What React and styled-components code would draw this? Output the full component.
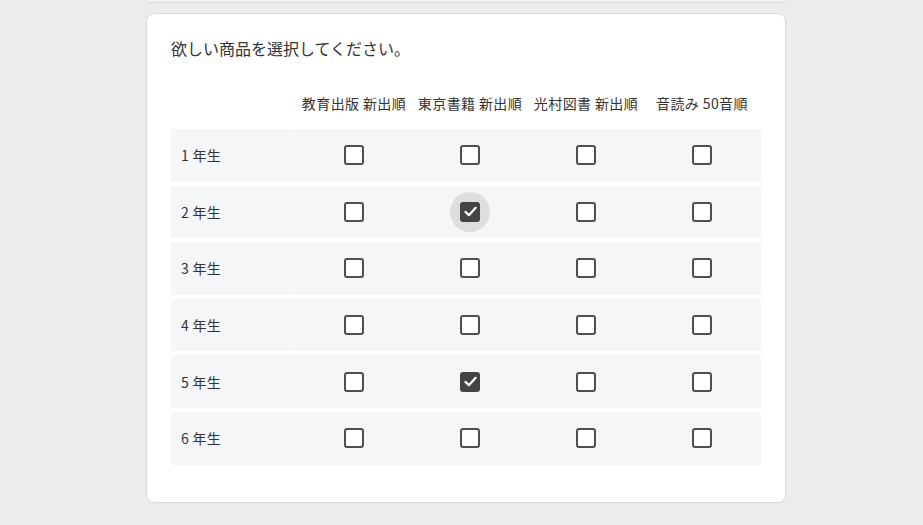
import React, { useState } from 'react';
import styled, { createGlobalStyle } from 'styled-components';

const GlobalStyle = createGlobalStyle`
  html, body {
    margin: 0;
    padding: 0;
    background: #ececec;
  }
  body {
    font-family: "Noto Sans CJK JP", "Noto Sans", sans-serif;
    color: #333;
  }
`;

const Page = styled.div`
  padding: 0 0 20px 146px;
  display: flex;
  flex-direction: column;
  gap: 10px;
`;

const PrevCard = styled.div`
  width: 638px;
  height: 2px;
  background: #f4f4f4;
  border: 1px solid #dcdcdc;
  border-top: none;
  border-radius: 0 0 8px 8px;
`;

const Card = styled.section`
  width: 590px;
  background: #fff;
  border: 1px solid #dadada;
  border-radius: 8px;
  padding: 23px 24px 37px 24px;
`;

const Title = styled.p`
  margin: 0 0 34px 0;
  font-size: 16px;
  line-height: 22px;
  color: #333;
`;

const Grid = styled.div`
  display: grid;
  grid-template-columns: 125px repeat(4, 116px) 1fr;
`;

const HeadRow = styled(Grid)`
  height: 20px;
  margin-bottom: 16px;
`;

const HeadCell = styled.div`
  font-size: 14px;
  line-height: 20px;
  letter-spacing: 0.4px;
  text-align: center;
  white-space: nowrap;
  color: #333;
`;

const Rows = styled.div`
  display: flex;
  flex-direction: column;
  gap: 4px;
`;

const Row = styled(Grid)`
  height: 52.6px;
  background: #f5f6f8;
  align-items: center;
`;

const Label = styled.div`
  height: 100%;
  display: flex;
  align-items: center;
  padding-left: 10px;
  font-size: 14px;
  letter-spacing: 0.3px;
  color: #333;
  border-right: 1px solid #fafbfc;
`;

const Cell = styled.div`
  display: flex;
  justify-content: center;
  align-items: center;
`;

const Halo = styled.span`
  width: 40px;
  height: 40px;
  border-radius: 50%;
  display: flex;
  justify-content: center;
  align-items: center;
  background: ${p => (p.$focus ? '#dedede' : 'transparent')};
  cursor: pointer;
`;

const Box = styled.span`
  box-sizing: border-box;
  width: 20px;
  height: 20px;
  border-radius: 3px;
  border: 2px solid ${p => (p.$on ? '#444' : '#4f4f4f')};
  background: ${p => (p.$on ? '#444' : '#fff')};
  display: flex;
  justify-content: center;
  align-items: center;
`;

const columns = ['教育出版 新出順', '東京書籍 新出順', '光村図書 新出順', '音読み 50音順'];
const grades = ['1 年生', '2 年生', '3 年生', '4 年生', '5 年生', '6 年生'];

const Check = ({ on, focus, onClick }) => (
  <Halo $focus={focus} onClick={onClick}>
    <Box $on={on}>
      {on && (
        <svg width="15" height="15" viewBox="0 0 14 14">
          <path d="M2.3 7.4 L5.5 10.4 L11.8 3.6" fill="none" stroke="#fff" strokeWidth="2.1" strokeLinecap="round" strokeLinejoin="round" />
        </svg>
      )}
    </Box>
  </Halo>
);

export default function App() {
  const [checked, setChecked] = useState({ '1-1': true, '4-1': true });
  const [focus, setFocus] = useState('1-1');

  const toggle = key => {
    setChecked(c => ({ ...c, [key]: !c[key] }));
    setFocus(key);
  };

  return (
    <>
      <GlobalStyle />
      <Page>
        <PrevCard />
        <Card>
          <Title>欲しい商品を選択してください。</Title>
          <HeadRow>
            <div />
            {columns.map(c => (
              <HeadCell key={c}>{c}</HeadCell>
            ))}
          </HeadRow>
          <Rows>
            {grades.map((g, r) => (
              <Row key={g}>
                <Label>{g}</Label>
                {columns.map((c, i) => {
                  const key = `${r}-${i}`;
                  return (
                    <Cell key={key}>
                      <Check on={!!checked[key]} focus={focus === key} onClick={() => toggle(key)} />
                    </Cell>
                  );
                })}
              </Row>
            ))}
          </Rows>
        </Card>
      </Page>
    </>
  );
}
